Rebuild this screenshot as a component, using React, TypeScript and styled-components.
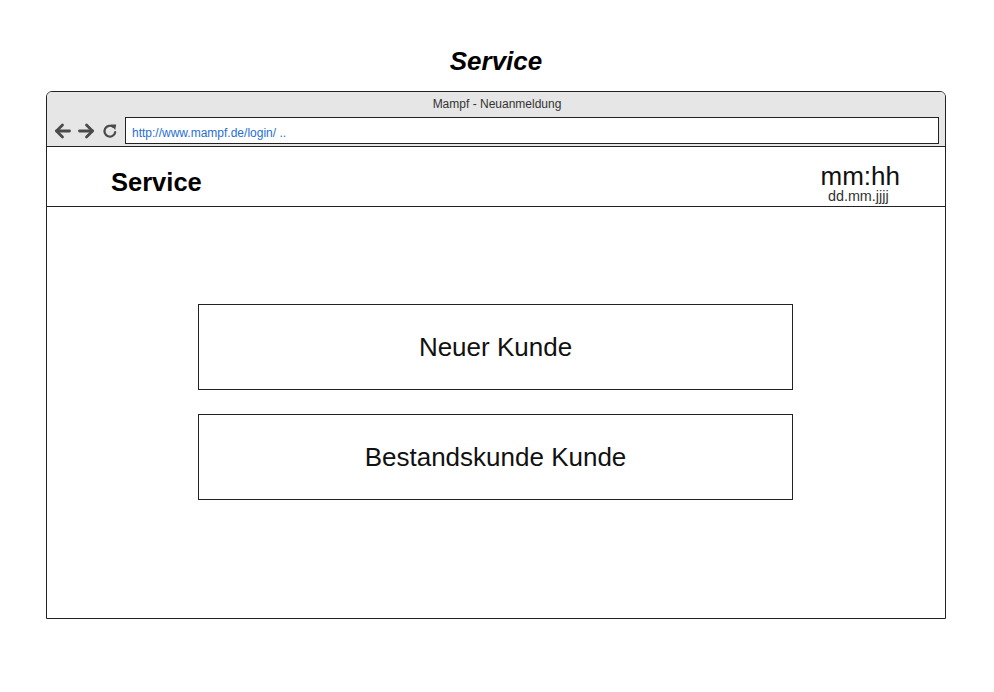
import React from "react";
import styled, { createGlobalStyle } from "styled-components";

const Global = createGlobalStyle`
  html, body { margin: 0; padding: 0; background: #ffffff; }
  body { font-family: "Liberation Sans", Arial, sans-serif; color: #000; }
  * { box-sizing: border-box; }
`;

const Page = styled.div`
  width: 994px;
  height: 692px;
  padding-top: 46px;
  display: flex;
  flex-direction: column;
`;

const PageTitle = styled.h1`
  margin: 0;
  height: 30px;
  line-height: 30px;
  text-align: center;
  font-size: 26px;
  font-weight: bold;
  font-style: italic;
  color: #000;
  padding-right: 2px;
`;

const Window = styled.div`
  margin: 15px 0 0 46px;
  width: 900px;
  height: 528px;
  border: 1px solid #222;
  border-radius: 6px 6px 0 0;
  display: flex;
  flex-direction: column;
  overflow: hidden;
`;

const Chrome = styled.div`
  height: 55px;
  background: #e6e6e6;
  border-bottom: 1px solid #222;
  display: flex;
  flex-direction: column;
`;

const ChromeTitle = styled.div`
  height: 25px;
  line-height: 25px;
  text-align: center;
  font-size: 12px;
  color: #333;
  padding-left: 2px;
`;

const NavRow = styled.div`
  height: 27px;
  display: flex;
  align-items: center;
  padding: 0 6px 0 7px;
`;

const NavIcons = styled.div`
  display: flex;
  align-items: center;
  gap: 7px;
  width: 71px;
  padding-top: 1px;
`;

const AddressBar = styled.div`
  flex: 1;
  height: 27px;
  background: #fff;
  border: 1px solid #222;
  font-size: 12px;
  color: #1f6fd6;
  padding-left: 6px;
  line-height: 30px;
  white-space: nowrap;
`;

const Header = styled.div`
  height: 60px;
  border-bottom: 1px solid #222;
  display: flex;
  justify-content: space-between;
  align-items: flex-start;
  padding: 16px 45px 0 64px;
`;

const HeaderTitle = styled.div`
  margin-top: 4px;
  font-size: 25.5px;
  line-height: 30px;
  font-weight: bold;
  color: #000;
`;

const Clock = styled.div`
  display: flex;
  flex-direction: column;
  align-items: center;
  margin-top: 1px;
`;

const Time = styled.div`
  font-size: 26px;
  line-height: 24px;
  color: #111;
`;

const DateText = styled.div`
  font-size: 14.4px;
  line-height: 14px;
  color: #333;
  margin-right: 4px;
  margin-top: 1px;
`;

const Content = styled.div`
  flex: 1;
  display: flex;
  flex-direction: column;
  align-items: flex-start;
  gap: 24px;
  padding: 97px 0 0 151px;
`;

const ChoiceButton = styled.button`
  width: 595px;
  height: 86px;
  background: #fff;
  border: 1px solid #222;
  border-radius: 0;
  font-family: "Liberation Sans", Arial, sans-serif;
  font-size: 26px;
  color: #111;
  cursor: pointer;
  padding: 0;
`;

const Arrow = ({ dir }: { dir: "left" | "right" }) => (
  <svg width="17" height="16" viewBox="0 0 17 16">
    <g
      transform={dir === "right" ? "translate(17 0) scale(-1 1)" : undefined}
      fill="none"
      stroke="#4a4a4a"
      strokeWidth="2.8"
      strokeLinecap="round"
      strokeLinejoin="round"
    >
      <path d="M15.5 8 H2.5" />
      <path d="M8.5 2 L2.5 8 L8.5 14" />
    </g>
  </svg>
);

const Reload = () => (
  <svg width="16" height="16" viewBox="0 0 16 16">
    <path
      d="M13.2 9.2 A5.4 5.4 0 1 1 11.2 3.9"
      fill="none"
      stroke="#4a4a4a"
      strokeWidth="2.2"
      strokeLinecap="round"
    />
    <path d="M8.6 1.4 L14.2 1.6 L13.2 7 Z" fill="#4a4a4a" />
  </svg>
);

export default function App() {
  return (
    <>
      <Global />
      <Page>
        <PageTitle>Service</PageTitle>
        <Window>
          <Chrome>
            <ChromeTitle>Mampf - Neuanmeldung</ChromeTitle>
            <NavRow>
              <NavIcons>
                <Arrow dir="left" />
                <Arrow dir="right" />
                <Reload />
              </NavIcons>
              <AddressBar>http://www.mampf.de/login/ ..</AddressBar>
            </NavRow>
          </Chrome>
          <Header>
            <HeaderTitle>Service</HeaderTitle>
            <Clock>
              <Time>mm:hh</Time>
              <DateText>dd.mm.jjjj</DateText>
            </Clock>
          </Header>
          <Content>
            <ChoiceButton>Neuer Kunde</ChoiceButton>
            <ChoiceButton>Bestandskunde Kunde</ChoiceButton>
          </Content>
        </Window>
      </Page>
    </>
  );
}
